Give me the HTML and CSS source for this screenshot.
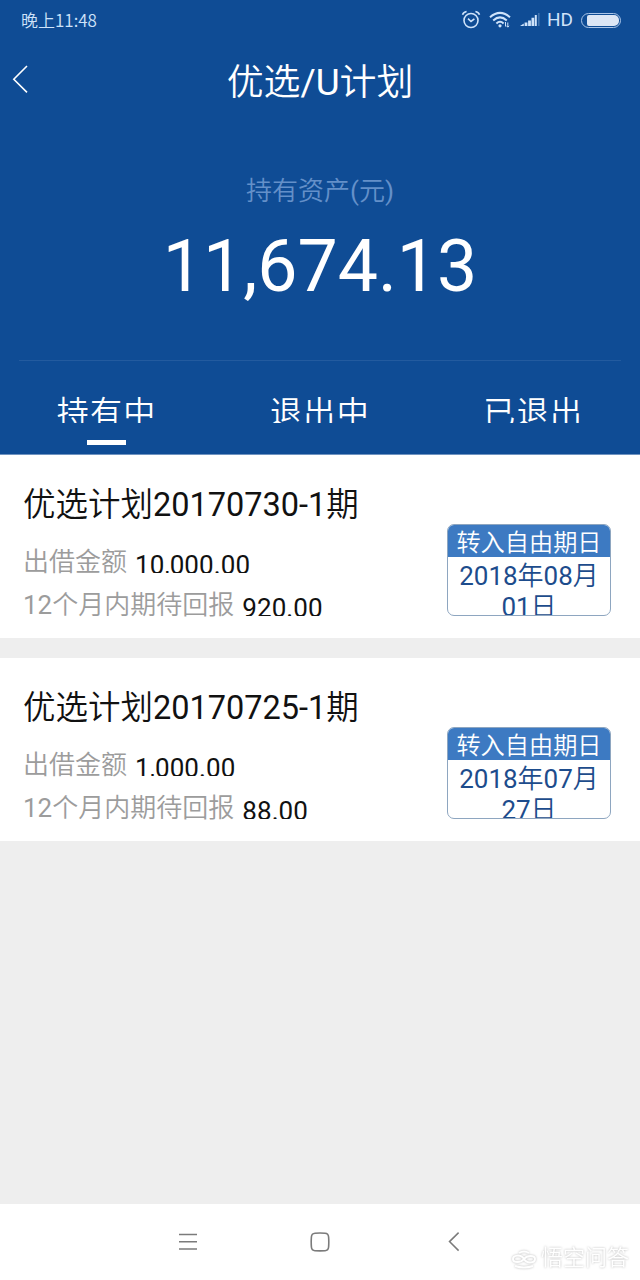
FILE: index.html
```
<!DOCTYPE html>
<html lang="zh-CN">
<head>
    <meta charset="UTF-8">
    <meta name="viewport" content="width=device-width, initial-scale=1.0">
    <title>优选/U计划</title>
    <link rel="stylesheet" href="styles.css">
</head>
<body>
    <header class="header">
        <div class="status-bar">
            <span class="time">晚上11:48</span>
            <div class="status-icons">
                <svg width="20" height="20" viewBox="0 0 20 20" fill="none" stroke="currentColor" stroke-width="1.6">
                    <circle cx="10" cy="10.5" r="7"/>
                    <path d="M7 8.7l3 2.8 3.4-2.6M1.5 4.7Q2.5 2 5.6 1.5M18.5 4.7Q17.5 2 14.4 1.5"/>
                </svg>
                <svg class="wifi" width="22" height="18" viewBox="0 0 22 18" fill="none" stroke="currentColor" stroke-width="2">
                    <path d="M1 6.2Q11-2.4 21 6.2M4.2 9.4Q11 3.4 17.8 9.4M7.4 12.4Q11 9 14.6 12.4"/>
                    <circle cx="11" cy="14.8" r="1.6" fill="currentColor" stroke="none"/>
                    <path stroke-width="1" d="M16.5 11v4.5M18.8 11.5V16M17.6 14.8l1.2 1.4 1.2-1.4"/>
                </svg>
                <svg class="signal" width="20" height="14" viewBox="0 0 20 14" fill="currentColor">
                    <path d="M0 13l3.8-2.6V13zM4.6 9.6h2.8V13H4.6zM8.1 7.4h2.8V13H8.1zM11.5 4.8h2.7V13h-2.7zM14.8 2h2v11h-2z"/>
                    <path opacity=".25" d="M18 0h1.6v13H18z"/>
                </svg>
                <span class="hd">HD</span>
                <span class="battery"><i></i></span>
            </div>
        </div>
        <div class="nav">
            <svg class="back" width="16" height="30" viewBox="0 0 16 30" fill="none" stroke="#fff" stroke-width="1.6">
                <path d="M15 2L1.8 15.2 15 28.4"/>
            </svg>
            <h1>优选/U计划</h1>
        </div>
        <div class="asset">
            <p class="asset-label">持有资产(元)</p>
            <p class="asset-value">11,674.13</p>
        </div>
        <div class="tabs">
            <div class="tab active"><span>持有中</span></div>
            <div class="tab"><span>退出中</span></div>
            <div class="tab"><span>已退出</span></div>
        </div>
    </header>

    <main class="list">
        <section class="plan">
            <div class="plan-info">
                <h2>优选计划20170730-1期</h2>
                <p class="row"><span class="label">出借金额</span><span class="num">10,000.00</span></p>
                <p class="row"><span class="label">12个月内期待回报</span><span class="num">920.00</span></p>
            </div>
            <div class="date-card">
                <div class="date-title">转入自由期日</div>
                <div class="date">2018年08月<br>01日</div>
            </div>
        </section>
        <section class="plan">
            <div class="plan-info">
                <h2>优选计划20170725-1期</h2>
                <p class="row"><span class="label">出借金额</span><span class="num">1,000.00</span></p>
                <p class="row"><span class="label">12个月内期待回报</span><span class="num">88.00</span></p>
            </div>
            <div class="date-card">
                <div class="date-title">转入自由期日</div>
                <div class="date">2018年07月<br>27日</div>
            </div>
        </section>
    </main>

    <footer class="sys-nav">
        <svg width="20" height="20" viewBox="0 0 20 20" fill="none" stroke="#7b7b7b" stroke-width="1.5">
            <path d="M1 2.5h18M1 9.7h18M1 16.9h18"/>
        </svg>
        <svg class="home" width="20" height="20" viewBox="0 0 20 20" fill="none" stroke="#7b7b7b" stroke-width="1.6">
            <path d="M5 1.2Q10 .8 15 1.2 18.4 1.4 18.6 5 19 10 18.6 15 18.4 18.4 15 18.7 10 19 5 18.7 1.6 18.4 1.4 15 1 10 1.4 5 1.6 1.4 5 1.2z"/>
        </svg>
        <svg width="12" height="20" viewBox="0 0 12 20" fill="none" stroke="#7b7b7b" stroke-width="1.5">
            <path d="M10.6 .6L1.5 9.6l9.1 9"/>
        </svg>
        <div class="watermark">
            <svg width="28" height="24" viewBox="0 0 28 24" fill="none" stroke="currentColor" stroke-width="2">
                <path d="M14 13C11 8 3 9 3 13s8 4 11 0 11-4 11 0-8 5-11 0M5 20q9 3 18 0M9 7q5-3 10 0"/>
            </svg>
            <span>悟空问答</span>
        </div>
    </footer>
</body>
</html>
```

FILE: styles.css
```
* {
    margin: 0;
    padding: 0;
    box-sizing: border-box;
}
body {
    width: 640px;
    height: 1280px;
    display: flex;
    flex-direction: column;
    background: #eeeeee;
    font-family: Roboto, "Noto Sans CJK SC DemiLight", "Noto Sans CJK SC", sans-serif;
    overflow: hidden;
}
h1, h2 {
    font-weight: 400;
}
svg {
    display: block;
    flex: none;
}

/* header */
.header {
    height: 455px;
    background: #0f4c95;
    color: #fff;
    border-bottom: 1px solid #6f93c0;
}
.status-bar {
    height: 40px;
    padding: 0 19px 0 21px;
    display: flex;
    align-items: center;
    justify-content: space-between;
    color: #cfe3fa;
}
.time {
    font-family: "Noto Sans CJK SC DemiLight", "Noto Sans CJK SC", sans-serif;
    font-size: 17px;
    line-height: 40px;
}
.status-icons {
    display: flex;
    align-items: center;
}
.wifi {
    margin-left: 8px;
}
.signal {
    margin: 0 7px 0 9px;
}
.hd {
    font-size: 19px;
    line-height: 40px;
}
.battery {
    width: 40px;
    height: 15px;
    margin-left: 8px;
    padding: 1px 1px 1px 5px;
    border: 1.5px solid #a9c4e8;
    border-radius: 8px;
}
.battery i {
    display: block;
    height: 11px;
    border-radius: 2px 5px 5px 2px;
    background: #dce6f5;
}
.nav {
    position: relative;
    height: 80px;
}
.nav h1 {
    font-size: 36.9px;
    line-height: 85px;
    text-align: center;
}
.back {
    position: absolute;
    left: 12px;
    top: 24px;
}
.asset {
    height: 241px;
    margin: 0 19px;
    padding-top: 51px;
    text-align: center;
    border-bottom: 1px solid #235b9f;
}
.asset-label {
    font-size: 26px;
    line-height: 40px;
    color: #6490c9;
}
.asset-value {
    margin-top: 14px;
    font-size: 71.6px;
    line-height: 84px;
}
.tabs {
    display: flex;
    padding-top: 31px;
}
.tab {
    flex: 1;
    height: 54px;
    text-align: center;
}
.tab span {
    display: block;
    height: 31px;
    font-size: 32px;
    line-height: 42px;
    letter-spacing: 1.3px;
    overflow: hidden;
}
.active::after {
    content: "";
    display: block;
    width: 39px;
    height: 5px;
    margin: 17px auto 0;
    background: #fff;
}

/* plans */
.list {
    flex: 1;
}
.plan {
    height: 183px;
    margin-bottom: 20px;
    padding: 0 29px 0 23px;
    display: flex;
    justify-content: space-between;
    background: #fff;
}
.plan h2 {
    height: 72px;
    padding-top: 26px;
    font-size: 32.5px;
    line-height: 48px;
    color: #111;
}
.row {
    display: flex;
    align-items: flex-end;
    height: 43px;
    white-space: nowrap;
}
.row:first-of-type {
    height: 46px;
}
.label {
    font-size: 26px;
    line-height: 40px;
    height: 31px;
    color: #9c9c9c;
}
.num {
    height: 23px;
    margin-left: 8px;
    font-size: 26px;
    line-height: 30px;
    letter-spacing: 0.1px;
    color: #111;
    overflow: hidden;
}
.date-card {
    width: 164px;
    height: 92px;
    margin-top: 69px;
    border: 1px solid #8ea6c0;
    border-radius: 7px;
    text-align: center;
    overflow: hidden;
}
.date-title {
    height: 32px;
    font-size: 24.2px;
    line-height: 36px;
    color: #fff;
    background: #3d7ac2;
}
.date {
    font-size: 26px;
    line-height: 31px;
    padding-top: 4px;
    color: #1d4c8c;
}

/* system navigation */
.sys-nav {
    position: relative;
    height: 76px;
    padding: 0 180px 0 178px;
    display: flex;
    align-items: center;
    justify-content: space-between;
    background: #fff;
}
.home {
    margin-right: 6px;
}
.watermark {
    position: absolute;
    right: 11px;
    bottom: 6px;
    display: flex;
    align-items: center;
    color: #fff;
    font-size: 22px;
    line-height: 32px;
    filter: drop-shadow(0 0 1px #bbb);
}
.watermark span {
    margin-left: 3px;
}
```
